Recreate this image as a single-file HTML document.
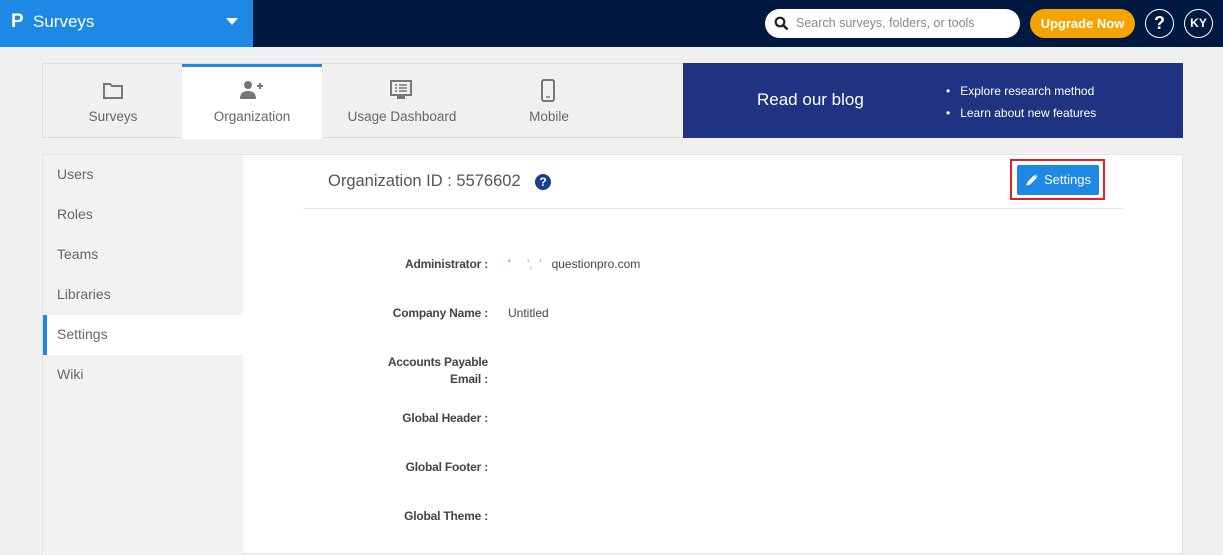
<!DOCTYPE html>
<html><head><meta charset="utf-8"><style>
*{box-sizing:border-box;margin:0;padding:0}
body{width:1223px;height:541px;overflow:hidden;background:#f0f0f0;font-family:"Liberation Sans",sans-serif;position:relative;color:#545454}
.a{position:absolute}
.top{left:0;top:0;width:1223px;height:47px;background:#001941}
.brand{left:0;top:0;width:253px;height:47px;background:#1e88e5;color:#fff}
.tabs{left:42px;top:63px;width:1141px;height:75px;background:#f0f0f0;border:1px solid #ddd}
.tab{top:0;height:75px;width:140px;text-align:center;font-size:13.5px;color:#666}
.tab span{position:absolute;left:0;right:0;top:45px}
.blog{left:683px;top:63px;width:500px;height:75px;background:#1f3382;color:#fff}
.panel{left:42px;top:154px;width:1141px;height:400px;background:#fff;border:1px solid #e3e3e3}
.side{left:0;top:0;width:200px;height:400px;background:#f2f2f2}
.si{position:absolute;left:14px;font-size:14px;color:#666}
.lbl{position:absolute;right:694px;font-size:12px;font-weight:bold;color:#444;text-align:right;line-height:17px;letter-spacing:-0.2px}
.val{position:absolute;left:465px;font-size:12px;color:#444}
</style></head><body>
<div class="a top"></div>
<div class="a brand">
 <div class="a" style="left:11px;top:11px;font-size:19px;font-weight:bold">P</div>
 <div class="a" style="left:33px;top:12px;font-size:17px">Surveys</div>
 <div class="a" style="left:226px;top:18px;width:0;height:0;border-left:6px solid transparent;border-right:6px solid transparent;border-top:7px solid #fff"></div>
</div>
<div class="a" style="left:765px;top:9px;width:255px;height:29px;background:#fff;border-radius:15px">
 <svg class="a" style="left:9px;top:7px" width="15" height="15" viewBox="0 0 15 15"><circle cx="6" cy="6" r="4.3" fill="none" stroke="#222" stroke-width="2.2"/><line x1="9" y1="9" x2="13.5" y2="13.5" stroke="#222" stroke-width="2.6"/></svg>
 <div class="a" style="left:31px;top:7px;font-size:12.5px;color:#888">Search surveys, folders, or tools</div>
</div>
<div class="a" style="left:1030px;top:9px;width:105px;height:29px;background:#f5a300;border-radius:15px;color:#fff;font-size:13px;font-weight:bold;text-align:center;line-height:29px">Upgrade Now</div>
<div class="a" style="left:1145px;top:9px;width:29px;height:29px;border:1.5px solid #fff;border-radius:50%;color:#fff;font-weight:bold;font-size:18px;text-align:center;line-height:26px">?</div>
<div class="a" style="left:1184px;top:9px;width:29px;height:29px;border:1.5px solid #fff;border-radius:50%;color:#fff;font-weight:bold;font-size:12px;text-align:center;line-height:26px">KY</div>

<div class="a tabs">
 <div class="a tab" style="left:0"><svg class="a" style="left:60px;top:18px" width="20" height="17"><path d="M1 2h6l2 2h10v12H1z" fill="none" stroke="#777" stroke-width="2"/></svg><span>Surveys</span></div>
 <div class="a tab" style="left:139px;background:#fff;border-top:3px solid #1e88e5"><svg class="a" style="left:58px;top:13px" width="24" height="20"><circle cx="8" cy="5" r="4" fill="#777"/><path d="M0 19c0-6 3-8 8-8s8 2 8 8z" fill="#777"/><path d="M17 6h6M20 3v6" stroke="#777" stroke-width="2"/></svg><span style="top:42px">Organization</span></div>
 <div class="a tab" style="left:279px;width:160px"><svg class="a" style="left:68px;top:16px" width="22" height="20"><rect x="1" y="1" width="20" height="14" fill="none" stroke="#777" stroke-width="2"/><path d="M5 5h2M9 5h8M5 8h2M9 8h8M5 11h2M9 11h8" stroke="#777" stroke-width="1.5"/><rect x="7" y="16" width="8" height="3" fill="#777"/></svg><span>Usage Dashboard</span></div>
 <div class="a tab" style="left:436px"><svg class="a" style="left:61px;top:15px" width="16" height="24"><rect x="2" y="1" width="12" height="21" rx="2" fill="none" stroke="#777" stroke-width="2"/><line x1="6" y1="18" x2="10" y2="18" stroke="#777" stroke-width="1.5"/></svg><span>Mobile</span></div>
</div>
<div class="a blog">
 <div class="a" style="left:74px;top:27px;font-size:17px">Read our blog</div>
 <div class="a" style="left:263px;top:17px;font-size:12px;line-height:22px">•&nbsp;&nbsp; Explore research method<br>•&nbsp;&nbsp; Learn about new features</div>
</div>

<div class="a panel">
 <div class="a side">
  <div class="si" style="top:11px">Users</div>
  <div class="si" style="top:51px">Roles</div>
  <div class="si" style="top:91px">Teams</div>
  <div class="si" style="top:131px">Libraries</div>
  <div class="a" style="left:0;top:160px;width:200px;height:40px;background:#fff;border-left:4px solid #1e88e5"></div>
  <div class="si" style="top:171px">Settings</div>
  <div class="si" style="top:211px">Wiki</div>
 </div>
 <div class="a" style="left:285px;top:17px;font-size:16.5px;color:#555">Organization ID : 5576602</div>
 <div class="a" style="left:492px;top:19px;width:16px;height:16px;border-radius:50%;background:#1a3d8f;color:#fff;font-size:12px;font-weight:bold;text-align:center;line-height:16px">?</div>
 <div class="a" style="left:260px;top:53px;width:821px;height:1px;background:#e8e8e8"></div>
 <div class="a" style="left:967px;top:4px;width:95px;height:41px;border:2px solid #e3202a"></div>
 <div class="a" style="left:974px;top:10px;width:82px;height:30px;background:#1e88e5;border-radius:2px;color:#fff;font-size:13px;line-height:30px;padding-left:27px">Settings</div>
 <svg class="a" style="left:983px;top:19px" width="12" height="12"><path d="M1 11l1-3 6-6 2 2-6 6z M9 1l2 2" fill="#fff" stroke="#fff" stroke-width="1"/></svg>
 <div class="lbl" style="top:101px">Administrator :</div>
 <div class="val" style="top:102px"><span style="color:#f33">'</span>&nbsp;&nbsp;&nbsp;&nbsp;&nbsp;<span style="color:#aaa">',&nbsp;&nbsp;'</span>&nbsp;&nbsp;&nbsp;questionpro.com</div>
 <div class="lbl" style="top:150px">Company Name :</div>
 <div class="val" style="top:151px">Untitled</div>
 <div class="lbl" style="top:199px">Accounts Payable<br>Email :</div>
 <div class="lbl" style="top:255px">Global Header :</div>
 <div class="lbl" style="top:304px">Global Footer :</div>
 <div class="lbl" style="top:353px">Global Theme :</div>
</div>
</body></html>
